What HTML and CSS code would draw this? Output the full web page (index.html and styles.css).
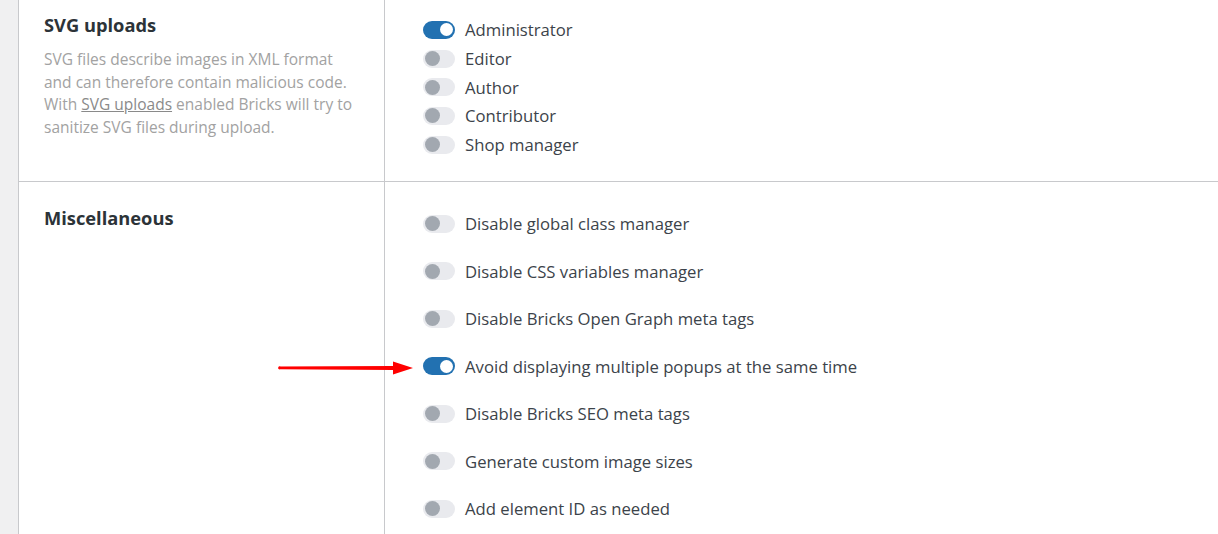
FILE: index.html
```html
<html>
	<head>
		<meta charset="utf-8" />
		<title>Bricks settings</title>
		<link rel="stylesheet" href="styles.css">
	</head>
	<body>
		<div class="wrap">
			<div class="settings">
				<div class="row row_svg">
					<div class="label">
						<h3>SVG uploads</h3>
						<p class="desc">SVG files describe images in XML format and can therefore contain malicious code. With <a href="#">SVG uploads</a> enabled Bricks will try to sanitize SVG files during upload.</p>
					</div>
					<ul class="options options_tight">
						<li><span class="toggle on"></span>Administrator</li>
						<li><span class="toggle"></span>Editor</li>
						<li><span class="toggle"></span>Author</li>
						<li><span class="toggle"></span>Contributor</li>
						<li><span class="toggle"></span>Shop manager</li>
					</ul>
				</div>
				<div class="row row_misc">
					<div class="label">
						<h3>Miscellaneous</h3>
					</div>
					<ul class="options options_wide">
						<li><span class="toggle"></span>Disable global class manager</li>
						<li><span class="toggle"></span>Disable CSS variables manager</li>
						<li><span class="toggle"></span>Disable Bricks Open Graph meta tags</li>
						<li><span class="toggle on"></span>Avoid displaying multiple popups at the same time</li>
						<li><span class="toggle"></span>Disable Bricks SEO meta tags</li>
						<li><span class="toggle"></span>Generate custom image sizes</li>
						<li><span class="toggle"></span>Add element ID as needed</li>
					</ul>
				</div>
			</div>
			<!-- annotation arrow -->
			<svg class="arrow" width="140" height="16" viewBox="0 0 140 16">
				<polygon points="1,6.6 115,5.9 115,1.5 135,8 115,14.5 115,10 1,9.2" fill="#ff0000" />
				<circle cx="1.4" cy="7.9" r="1.3" fill="#ff0000" />
			</svg>
		</div>
	</body>
</html>
```

FILE: styles.css
```css
	* {margin: 0; padding: 0; box-sizing: border-box;}
	body {background: #f0f0f1; font-family: "Open Sans", "Noto Sans", sans-serif; color: #3c434a; overflow: hidden;}
/*wrap*/
	.wrap {position: relative; margin-left: 18px; height: 534px; background: #fff; border-left: 1px solid #c8c9cc;}
/*rows*/
	.row {display: grid; grid-template-columns: 366px 1fr; border-bottom: 1px solid #c8c9cc;}
	.label {border-right: 1px solid #c8c9cc; padding: 13px 28px 0 25px;}
	.label h3 {font-size: 18.3px; line-height: 24px; font-weight: 700; color: #2c3338;}
	.desc {margin-top: 11px; font-size: 15.5px; line-height: 22.5px; color: #a2a2a2;}
	.desc a {color: #8a8a8a; text-decoration: underline;}
	.row_misc .label {padding-top: 24px; height: 360px;}
/*options*/
	.options {list-style: none; padding-left: 38px; font-size: 16.7px;}
	.options li {display: flex; align-items: center; color: #3c434a;}
	.options_tight {padding-top: 15.5px; padding-bottom: 22.5px;}
	.options_tight li {height: 28.7px;}
	.options_wide {padding-top: 17.5px;}
	.options_wide li {height: 47.5px;}
/*toggle*/
	.toggle {position: relative; flex: none; width: 32px; height: 18px; border-radius: 9px; background: #e9eaee; margin-right: 10px;}
	.toggle:after {content: ""; position: absolute; left: 2px; top: 1.5px; width: 15px; height: 15px; border-radius: 50%; background: #a2a8b0;}
	.toggle.on {background: #2271b1;}
	.toggle.on:after {left: auto; right: 2.5px; top: 2.5px; width: 13px; height: 13px; background: #fff;}
/*arrow*/
	.arrow {position: absolute; left: 259px; top: 360px;}
```
